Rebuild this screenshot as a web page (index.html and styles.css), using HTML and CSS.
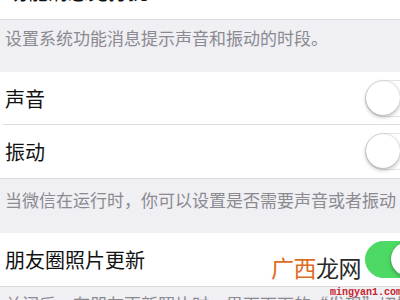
FILE: index.html
```html
<!DOCTYPE html>
<html lang="zh-CN">

<head>
    <meta charset="UTF-8">
    <meta name="viewport" content="width=device-width, initial-scale=1.0">
    <title>新消息通知</title>
    <link rel="stylesheet" href="styles.css">
</head>

<body>
    <!-- 上一组被截掉的最后一行 -->
    <div class="cutRow">
        <div class="label">功能消息免打扰</div>
    </div>
    <div class="tip">设置系统功能消息提示声音和振动的时段。</div>

    <div class="group">
        <div class="row line">
            <span class="label">声音</span>
            <span class="switch"><span class="knob"></span></span>
        </div>
        <div class="row">
            <span class="label">振动</span>
            <span class="switch"><span class="knob"></span></span>
        </div>
    </div>
    <div class="tip tip-low">当微信在运行时，你可以设置是否需要声音或者振动</div>

    <div class="group">
        <div class="row">
            <span class="label">朋友圈照片更新</span>
            <span class="switch on"><span class="knob"></span></span>
        </div>
    </div>
    <div class="tip tip-last">关闭后，有朋友更新照片时，界面下面的“发现”切换按钮上不再出现红点提示。</div>

    <!-- 水印 -->
    <div class="mark"><span class="orange">广西</span>龙网</div>
    <div class="site">mingyan1.com</div>
</body>

</html>
```

FILE: styles.css
```css
body {
    margin: 0;
    width: 400px;
    height: 300px;
    overflow: hidden;
    position: relative;
    background: #efeff4;
    font-family: "Noto Sans CJK SC", "Noto Sans", sans-serif;
}

.cutRow {
    height: 20px;
    overflow: hidden;
    background: #fff;
    border-bottom: 1px solid #dcdce0;
    box-sizing: border-box;
}

.cutRow .label {
    margin: -18px 0 0 8px;
    line-height: 20px;
}

.label {
    font-size: 20px;
    color: #111;
    white-space: nowrap;
}

.tip {
    height: 52px;
    padding: 8px 0 0 5px;
    box-sizing: border-box;
    font-size: 17px;
    line-height: 20px;
    color: #8a8a8f;
    white-space: nowrap;
}

.tip-low {
    height: 54px;
    padding-top: 11px;
}

.tip-last {
    padding-top: 7px;
}

.group {
    background: #fff;
    border-bottom: 1px solid #d9d9de;
}

.row {
    height: 53px;
    display: flex;
    align-items: center;
    padding-left: 5px;
    position: relative;
}

.line:after {
    content: '';
    position: absolute;
    left: 3px;
    right: 0;
    bottom: 0;
    border-bottom: 1px solid #dedee2;
}

.switch {
    margin-left: auto;
    margin-right: -26px;
    width: 61px;
    height: 37px;
    border-radius: 19px;
    box-sizing: border-box;
    border: 1.5px solid #e3e3e7;
    background: #fff;
    display: flex;
    justify-content: flex-start;
}

.knob {
    width: 34px;
    height: 34px;
    border-radius: 50%;
    background: #fff;
    box-shadow: 0 2px 4px rgba(0, 0, 0, 0.28), 0 0 1px rgba(0, 0, 0, 0.3);
}

.switch.on {
    background: #4cd964;
    border-color: #4cd964;
    justify-content: flex-end;
}

.mark {
    position: absolute;
    left: 271px;
    top: 252px;
    font-size: 23px;
    line-height: 30px;
    color: #2a2a2a;
    letter-spacing: -0.5px;
}

.orange {
    color: #e06a1e;
}

.site {
    position: absolute;
    left: 330px;
    top: 287px;
    font-family: "Liberation Mono", monospace;
    font-size: 10px;
    font-weight: bold;
    color: #c8242c;
}
```
